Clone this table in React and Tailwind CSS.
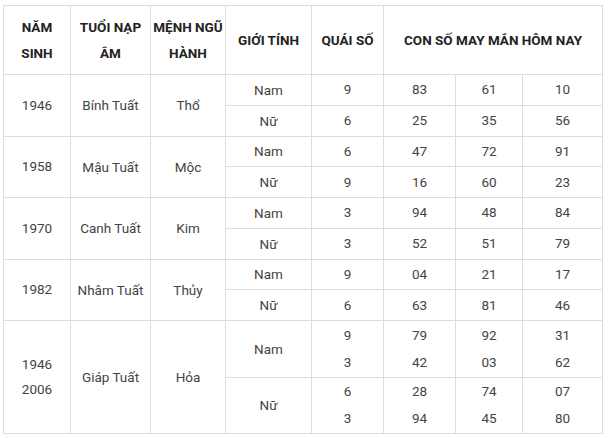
import React from "react";

const groups = [
  {
    year: ["1946"],
    tuoi: "Bính Tuất",
    menh: "Thổ",
    rows: [
      { gt: "Nam", qs: ["9"], n: [["83"], ["61"], ["10"]] },
      { gt: "Nữ", qs: ["6"], n: [["25"], ["35"], ["56"]] },
    ],
  },
  {
    year: ["1958"],
    tuoi: "Mậu Tuất",
    menh: "Mộc",
    rows: [
      { gt: "Nam", qs: ["6"], n: [["47"], ["72"], ["91"]] },
      { gt: "Nữ", qs: ["9"], n: [["16"], ["60"], ["23"]] },
    ],
  },
  {
    year: ["1970"],
    tuoi: "Canh Tuất",
    menh: "Kim",
    rows: [
      { gt: "Nam", qs: ["3"], n: [["94"], ["48"], ["84"]] },
      { gt: "Nữ", qs: ["3"], n: [["52"], ["51"], ["79"]] },
    ],
  },
  {
    year: ["1982"],
    tuoi: "Nhâm Tuất",
    menh: "Thủy",
    rows: [
      { gt: "Nam", qs: ["9"], n: [["04"], ["21"], ["17"]] },
      { gt: "Nữ", qs: ["6"], n: [["63"], ["81"], ["46"]] },
    ],
  },
  {
    year: ["1946", "2006"],
    tuoi: "Giáp Tuất",
    menh: "Hỏa",
    rows: [
      { gt: "Nam", qs: ["9", "3"], n: [["79", "42"], ["92", "03"], ["31", "62"]] },
      { gt: "Nữ", qs: ["6", "3"], n: [["28", "94"], ["74", "45"], ["07", "80"]] },
    ],
  },
];

function Lines({ items, lh }) {
  return items.map((t, i) => (
    <div key={i} className={lh}>
      {t}
    </div>
  ));
}

export default function App() {
  const td = "border border-[#dddddd] text-center align-middle p-0";
  return (
    <div className="bg-white w-[608px] h-[438px] pt-[5px] pl-[3px] font-['Roboto',sans-serif] text-[13.5px] text-[#444]">
      <table className="table-fixed border-collapse w-[599px]">
        <colgroup>
          <col className="w-[67px]" />
          <col className="w-[80px]" />
          <col className="w-[75px]" />
          <col className="w-[86px]" />
          <col className="w-[72px]" />
          <col className="w-[72px]" />
          <col className="w-[67px]" />
          <col className="w-[80px]" />
        </colgroup>
        <thead>
          <tr className="h-[69px] font-bold text-[#222] uppercase leading-[26px]">
            <th className={td}>
              Năm
              <br />
              Sinh
            </th>
            <th className={td}>
              Tuổi nạp
              <br />
              âm
            </th>
            <th className={td}>
              Mệnh ngũ
              <br />
              hành
            </th>
            <th className={td}>Giới tính</th>
            <th className={td}>Quái số</th>
            <th className={td} colSpan={3}>
              Con số may mắn hôm nay
            </th>
          </tr>
        </thead>
        <tbody>
          {groups.map((g, gi) => {
            const tall = g.year.length > 1;
            const h = tall ? "h-[56.5px]" : "h-[30.75px]";
            return g.rows.map((r, ri) => (
              <tr key={gi + "-" + ri} className={h}>
                {ri === 0 && (
                  <>
                    <td className={td} rowSpan={2}>
                      <Lines items={g.year} lh="leading-[25px]" />
                    </td>
                    <td className={td} rowSpan={2}>
                      {g.tuoi}
                    </td>
                    <td className={td} rowSpan={2}>
                      {g.menh}
                    </td>
                  </>
                )}
                <td className={td}>{r.gt}</td>
                <td className={td}>
                  <Lines items={r.qs} lh="leading-[27px]" />
                </td>
                {r.n.map((c, ci) => (
                  <td key={ci} className={td}>
                    <Lines items={c} lh="leading-[27px]" />
                  </td>
                ))}
              </tr>
            ));
          })}
        </tbody>
      </table>
    </div>
  );
}
